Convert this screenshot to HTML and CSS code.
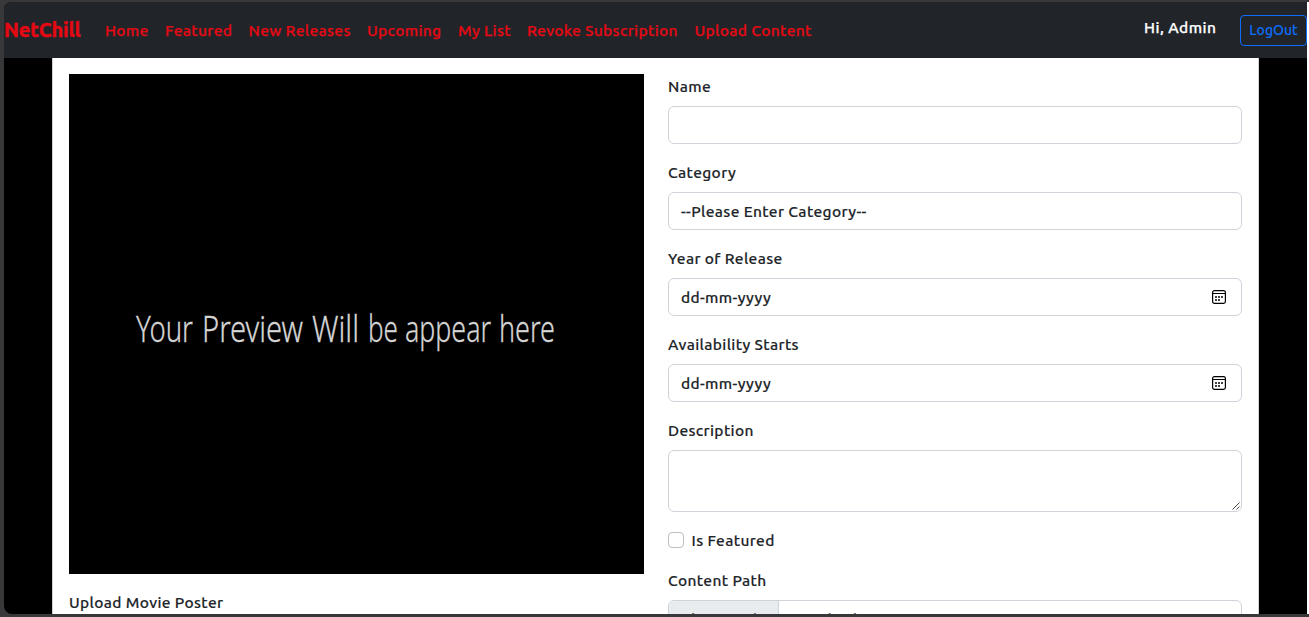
FILE: index.html
```html
<!DOCTYPE html>
<html lang="en">
<head>
<meta charset="utf-8">
<title>NetChill</title>
<link rel="stylesheet" href="styles.css">
</head>
<body>
<div class="window">
  <nav class="navbar">
    <a class="brand">NetChill</a>
    <div class="links">
      <a class="w-home">Home</a>
      <a class="w-featured">Featured</a>
      <a class="w-new">New Releases</a>
      <a class="w-upcoming">Upcoming</a>
      <a class="w-list">My List</a>
      <a class="w-revoke">Revoke Subscription</a>
      <a class="w-upload">Upload Content</a>
    </div>
    <span class="greeting">Hi, Admin</span>
    <button class="logout">LogOut</button>
  </nav>
  <main class="card">
    <section class="column">
      <svg class="preview" width="575" height="500" viewBox="0 0 575 500">
        <g transform="translate(0 268)">
          <text x="67" textLength="57" lengthAdjust="spacingAndGlyphs">Your</text>
          <text x="133" textLength="101" lengthAdjust="spacingAndGlyphs">Preview</text>
          <text x="243" textLength="47" lengthAdjust="spacingAndGlyphs">Will</text>
          <text x="299" textLength="30" lengthAdjust="spacingAndGlyphs">be</text>
          <text x="336" textLength="86" lengthAdjust="spacingAndGlyphs">appear</text>
          <text x="430" textLength="56" lengthAdjust="spacingAndGlyphs">here</text>
        </g>
      </svg>
      <label class="label poster">Upload Movie Poster</label>
    </section>
    <section class="column">
      <div class="field">
        <label class="label">Name</label>
        <div class="control"></div>
      </div>
      <div class="field">
        <label class="label">Category</label>
        <div class="control"><span class="choice">--Please Enter Category--</span></div>
      </div>
      <div class="field">
        <label class="label">Year of Release</label>
        <div class="control"><span class="date">dd-mm-yyyy</span>
          <svg class="calendar" width="14" height="14" viewBox="0 0 14 14"><rect x=".6" y=".6" width="12.8" height="12.8" rx="1.8" fill="none" stroke="#000" stroke-width="1.2"/><path d="M1 3.5h12" stroke="#000"/><path d="M6 6h2v2H6zM9 6h2v2H9zM3 6h2v2H3zM3 9h2v2H3zM6 9h2v2H6z" fill="#444"/></svg></div>
      </div>
      <div class="field">
        <label class="label">Availability Starts</label>
        <div class="control"><span class="date">dd-mm-yyyy</span>
          <svg class="calendar" width="14" height="14" viewBox="0 0 14 14"><rect x=".6" y=".6" width="12.8" height="12.8" rx="1.8" fill="none" stroke="#000" stroke-width="1.2"/><path d="M1 3.5h12" stroke="#000"/><path d="M6 6h2v2H6zM9 6h2v2H9zM3 6h2v2H3zM3 9h2v2H3zM6 9h2v2H6z" fill="#444"/></svg></div>
      </div>
      <div class="field">
        <label class="label">Description</label>
        <div class="control area">
          <svg width="8" height="8" viewBox="0 0 8 8"><path d="M.5 7.5l7-7M4.5 7.5l3-3" stroke="#444" fill="none"/></svg>
        </div>
      </div>
      <div class="check"><span class="box"></span><label class="label">Is Featured</label></div>
      <div class="field">
        <label class="label">Content Path</label>
        <div class="control file"><span class="choose">Choose File</span><span class="chosen">No file chosen</span></div>
      </div>
    </section>
  </main>
</div>
</body>
</html>
```
FILE: styles.css
```css
* { box-sizing: border-box; }
body {
  margin: 0;
  height: 617px;
  overflow: hidden;
  padding: 2px 0 0 4px;
  background: linear-gradient(#fff, #fff) right 0 top 2px / 2px 612px no-repeat, #38383a;
  font: 500 15.5px/24px Ubuntu, "Noto Sans", sans-serif;
  letter-spacing: .35px;
  color: #212529;
}
.window {
  width: 1303px;
  height: 612px;
  overflow: hidden;
  border-radius: 8px 0 0 8px;
  background: #000;
}
.navbar {
  display: flex;
  align-items: center;
  height: 56px;
  background: #212529;
  color: #e50914;
}
.brand {
  width: 93px;
  font-size: 20px;
  font-weight: 700;
  letter-spacing: -.1px;
  -webkit-text-stroke: .5px #e50914;
}
.links { display: flex; flex: 1; }
.links a { padding: 1px 0 0 8px; white-space: nowrap; -webkit-text-stroke: .25px #e50914; }
.w-home { width: 60px; }
.w-featured { width: 83.5px; }
.w-new { width: 118.5px; }
.w-upcoming { width: 91px; }
.w-list { width: 69px; }
.w-revoke { width: 167.5px; }
.w-upload { width: 134px; }
.greeting { width: 96px; color: #fff; margin-bottom: 4px; letter-spacing: .45px; white-space: nowrap; -webkit-text-stroke: .25px #fff; }
.logout {
  width: 67px;
  height: 31px;
  padding: 0;
  border: 1px solid #0d6efd;
  border-radius: 4px;
  background: none;
  color: #0d6efd;
  font: 500 14px/21px Ubuntu, "Noto Sans", sans-serif;
}
.card {
  display: flex;
  gap: 24px;
  width: 1207px;
  margin-left: 48px;
  height: 580px;
  padding: 16px;
  border: solid #d5d5d5;
  border-width: 0 1px;
  background: #fff;
}
.column { flex: none; }
.column:first-child { width: 575px; }
.column:last-child { width: 574px; }
.preview {
  display: block;
  background: #000;
  fill: #d4d4d4;
  stroke: #d4d4d4;
  stroke-width: .3px;
  letter-spacing: 0;
  font: 300 36.8px "Noto Sans", "Open Sans", sans-serif;
}
.label {
  display: block;
  height: 24px;
  padding-top: 1px;
  white-space: nowrap;
  -webkit-text-stroke: .15px #212529;
}
.poster { margin-top: 16px; }
.field { margin-bottom: 16px; }
.field .label { margin-bottom: 8px; }
.control {
  display: flex;
  align-items: center;
  justify-content: space-between;
  height: 38px;
  padding: 0 15px 0 12px;
  border: 1px solid #ced4da;
  border-radius: 6px;
  -webkit-text-stroke: .15px #212529;
}
.choice, .date { padding-top: 2px; }
.area {
  height: 62px;
  padding: 0 1px 1px 0;
  align-items: flex-end;
  justify-content: flex-end;
}
.check { display: flex; align-items: center; gap: 7.5px; margin-bottom: 16px; }
.box { width: 16px; height: 16px; border: 1px solid #bfbfbf; border-radius: 4px; }
.file { padding: 0; justify-content: flex-start; overflow: hidden; }
.choose {
  width: 110px;
  height: 36px;
  padding: 7px 12px;
  border-right: 1px solid #ced4da;
  background: #e9ecef;
  white-space: nowrap;
}
.chosen { padding: 1px 0 0 12px; }
```
